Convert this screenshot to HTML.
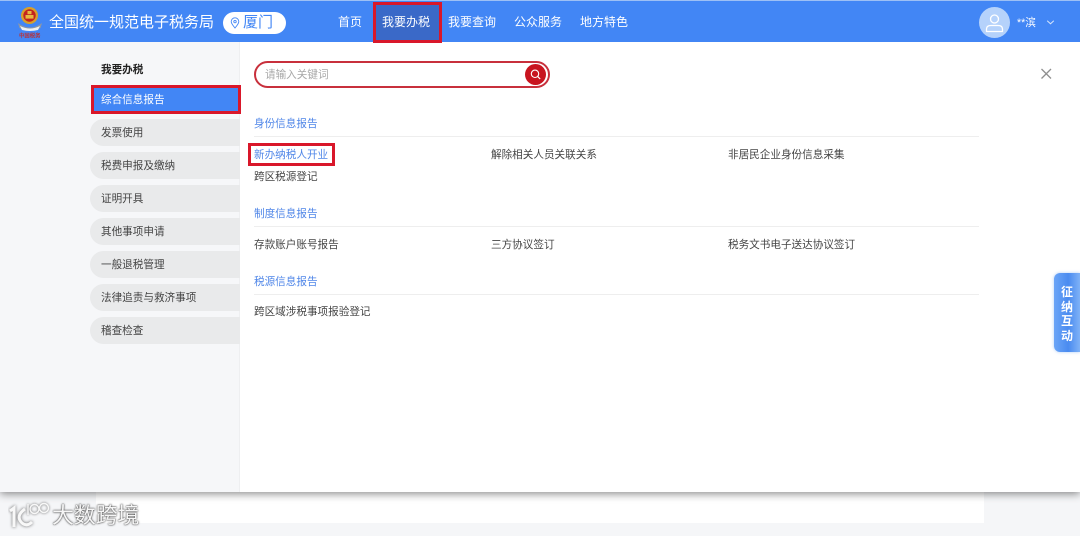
<!DOCTYPE html>
<html lang="zh">
<head>
<meta charset="utf-8">
<title>我要办税</title>
<style>
html,body{margin:0;padding:0;}
body{width:1080px;height:536px;position:relative;overflow:hidden;background:#f5f6f8;font-family:"Liberation Sans","Noto Sans CJK SC",sans-serif;}
.a{position:absolute;white-space:nowrap;}
.nav{color:#fff;font-size:12px;line-height:16px;top:14px;}
.side{left:90px;width:150px;height:27px;background:#e9eaeb;border-radius:14px 0 0 14px;color:#444;font-size:10.6px;line-height:29px;text-indent:11px;}
.t{font-size:10.6px;line-height:14px;color:#444;}
.h{font-size:10.6px;line-height:14px;color:#4f86e8;left:254px;}
.ln{left:254px;width:725px;height:1px;background:#eeeeee;}
.red{position:absolute;border:3px solid #d9172a;box-sizing:border-box;}
</style>
</head>
<body>
<!-- page behind -->
<div class="a" style="left:96px;top:490px;width:888px;height:33px;background:#fff;"></div>

<!-- panel -->
<div class="a" style="left:0;top:42px;width:1080px;height:450px;background:#fff;box-shadow:0 2px 8px rgba(0,0,0,.45);"></div>
<div class="a" style="left:0;top:42px;width:240px;height:450px;background:#f6f7f9;border-right:1px solid #eeeff1;box-sizing:border-box;"></div>

<!-- header -->
<div class="a" style="left:0;top:0;width:1080px;height:42px;background:#4286f5;border-top:1px solid #9dc0f5;box-sizing:border-box;"></div>

<!-- emblem -->
<svg class="a" style="left:17px;top:6px;" width="26" height="33" viewBox="0 0 26 33">
<path d="M1 17 Q13 26 25 17 L23.5 22 Q13 27 2.5 22Z" fill="#8d97a6"/>
<path d="M3 20 Q13 25 23 20 L21 24 Q13 26 5 24Z" fill="#eef0f2"/>
<circle cx="12.5" cy="9.5" r="8.5" fill="#d8a02a"/>
<circle cx="12.5" cy="9.5" r="6.2" fill="#c3241f"/>
<rect x="8.5" y="9" width="8" height="3.6" fill="#e6b940"/>
<rect x="10.5" y="5" width="4" height="3.2" fill="#e6b940"/>
<text x="2" y="31.5" font-size="5.4" fill="#b8323a" font-family="'Noto Sans CJK SC',sans-serif" font-weight="bold">中国税务</text>
</svg>

<div class="a" style="left:49px;top:13px;color:#fff;font-size:15px;line-height:20px;">全国统一规范电子税务局</div>

<!-- city pill -->
<div class="a" style="left:223px;top:12px;width:63px;height:22px;background:#fff;border-radius:11px;"></div>
<svg class="a" style="left:230px;top:17px;" width="10" height="12" viewBox="0 0 10 12"><path d="M5 11 C2.5 8 1.2 6.3 1.2 4.6 A3.8 3.8 0 0 1 8.8 4.6 C8.8 6.3 7.5 8 5 11Z" fill="none" stroke="#4286f5" stroke-width=".9"/><circle cx="5" cy="4.6" r="1.2" fill="none" stroke="#4286f5" stroke-width=".9"/></svg>
<div class="a" style="left:243px;top:13px;color:#4286f5;font-size:15px;line-height:20px;">厦门</div>

<!-- nav -->
<div class="a" style="left:375px;top:3px;width:66px;height:39px;background:#3a69c8;"></div>
<div class="a nav" style="left:338px;">首页</div>
<div class="a nav" style="left:382px;">我要办税</div>
<div class="a nav" style="left:448px;">我要查询</div>
<div class="a nav" style="left:514px;">公众服务</div>
<div class="a nav" style="left:580px;">地方特色</div>
<div class="red" style="left:373px;top:2px;width:69px;height:41px;"></div>

<!-- user -->
<div class="a" style="left:979px;top:7px;width:31px;height:31px;border-radius:50%;background:#b5d2fb;"></div>
<svg class="a" style="left:979px;top:7px;" width="31" height="31" viewBox="0 0 31 31">
<circle cx="15.5" cy="12" r="4" fill="none" stroke="#fff" stroke-width="1.3"/>
<path d="M7.5 24.5 V22 Q7.5 18.5 12 18.5 H19 Q23.5 18.5 23.5 22 V24.5Z" fill="none" stroke="#fff" stroke-width="1.3" stroke-linejoin="round"/>
</svg>
<div class="a" style="left:1017px;top:16px;color:#fff;font-size:10.6px;line-height:15px;">**滨</div>
<svg class="a" style="left:1046px;top:19px;" width="9" height="7" viewBox="0 0 9 7"><path d="M1.2 1.8 L4.5 4.8 L7.8 1.8" fill="none" stroke="#d5e4fb" stroke-width="1"/></svg>

<!-- sidebar -->
<div class="a" style="left:101px;top:63px;font-size:10.6px;line-height:14px;color:#222;font-weight:bold;">我要办税</div>
<div class="a" style="left:93px;top:87px;width:146px;height:25px;background:#4286f5;color:#fff;font-size:10.6px;line-height:27px;text-indent:8px;">综合信息报告</div>
<div class="red" style="left:91px;top:85px;width:150px;height:29px;"></div>
<div class="a side" style="top:119px;">发票使用</div>
<div class="a side" style="top:152px;">税费申报及缴纳</div>
<div class="a side" style="top:185px;">证明开具</div>
<div class="a side" style="top:218px;">其他事项申请</div>
<div class="a side" style="top:251px;">一般退税管理</div>
<div class="a side" style="top:284px;">法律追责与救济事项</div>
<div class="a side" style="top:317px;">稽查检查</div>

<!-- search -->
<div class="a" style="left:254px;top:61px;width:296px;height:27px;border:2px solid #c8303c;border-radius:14px;box-sizing:border-box;background:#fff;"></div>
<div class="a" style="left:265px;top:68px;font-size:10.6px;line-height:15px;color:#a8a8a8;">请输入关键词</div>
<div class="a" style="left:525px;top:64px;width:21px;height:21px;border-radius:50%;background:#c8141f;"></div>
<svg class="a" style="left:525px;top:64px;" width="21" height="21" viewBox="0 0 21 21"><circle cx="10" cy="9.8" r="3.7" fill="none" stroke="#fff" stroke-width="1.1"/><path d="M12.8 12.6 L15.2 15" stroke="#fff" stroke-width="1.2" fill="none"/></svg>

<!-- close -->
<svg class="a" style="left:1040px;top:67px;" width="13" height="13" viewBox="0 0 13 13"><path d="M1.5 2 L11 11.5 M11 2 L1.5 11.5" stroke="#8f8f8f" stroke-width="1.3" fill="none"/></svg>

<!-- content -->
<div class="a h" style="top:117px;">身份信息报告</div>
<div class="a ln" style="top:136px;"></div>
<div class="a t" style="left:254px;top:148px;color:#4f86e8;">新办纳税人开业</div>
<div class="red" style="left:248px;top:143px;width:87px;height:23px;"></div>
<div class="a t" style="left:491px;top:148px;">解除相关人员关联关系</div>
<div class="a t" style="left:728px;top:148px;">非居民企业身份信息采集</div>
<div class="a t" style="left:254px;top:170px;">跨区税源登记</div>

<div class="a h" style="top:207px;">制度信息报告</div>
<div class="a ln" style="top:226px;"></div>
<div class="a t" style="left:254px;top:238px;">存款账户账号报告</div>
<div class="a t" style="left:491px;top:238px;">三方协议签订</div>
<div class="a t" style="left:728px;top:238px;">税务文书电子送达协议签订</div>

<div class="a h" style="top:275px;">税源信息报告</div>
<div class="a ln" style="top:294px;"></div>
<div class="a t" style="left:254px;top:305px;">跨区域涉税事项报验登记</div>

<!-- floating tab -->
<div class="a" style="left:1054px;top:273px;width:26px;height:79px;border-radius:6px 0 0 6px;background:linear-gradient(90deg,#6ba5f7,#4a8bf0 55%,#7fb2f7);box-shadow:0 0 3px rgba(120,170,240,.6);"></div>
<div class="a" style="left:1061px;top:285px;width:12px;color:#fff;font-size:12px;line-height:14.5px;white-space:normal;text-align:center;font-weight:bold;">征纳互动</div>

<!-- watermark -->
<svg class="a" style="left:8px;top:500px;" width="44" height="30" viewBox="0 0 44 30">
<g fill="none" stroke="#f8f8f8" stroke-width="3" style="filter:drop-shadow(0 0 1.5px rgba(0,0,0,.6));">
<path d="M2 11 L6 8 V27"/>
<path d="M17 9 Q7 16 14 23 Q19 27 24 22"/>
</g>
<g fill="none" stroke="#f8f8f8" stroke-width="1.4" style="filter:drop-shadow(0 0 1.2px rgba(0,0,0,.6));">
<path d="M20 4 V15"/>
<circle cx="26.5" cy="9" r="4.5"/>
<circle cx="36" cy="8" r="4.5"/>
</g>
</svg>
<div class="a" style="left:52px;top:503px;color:#f6f6f6;font-size:22px;line-height:26px;letter-spacing:-.2px;text-shadow:0 0 2px rgba(0,0,0,.75),0 0 1px rgba(0,0,0,.7);">大数跨境</div>
</body>
</html>
